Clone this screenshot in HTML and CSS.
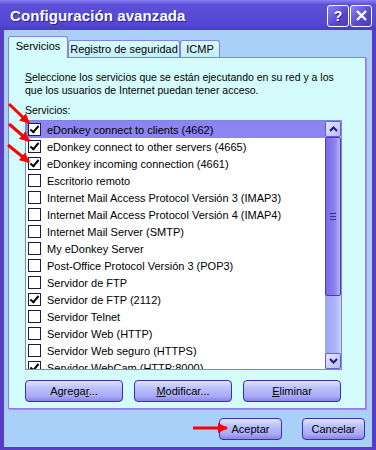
FILE: index.html
```html
<!DOCTYPE html>
<html lang="es">
<head>
    <meta charset="UTF-8">
    <title>Configuración avanzada</title>
    <link rel="stylesheet" href="styles.css">
</head>
<body>
<div class="window">
    <div class="titlebar">
        <span class="title">Configuración avanzada</span>
        <span class="title-btn">?</span>
        <span class="title-btn close">
            <svg width="13" height="13" viewBox="0 0 13 13"><path d="M2 2 L11 11 M11 2 L2 11" stroke="#fff" stroke-width="2.4"/></svg>
        </span>
    </div>

    <div class="client">
        <div class="tabs">
            <div class="tab active">Servicios</div>
            <div class="tab tab-wide">Registro de seguridad</div>
            <div class="tab tab-small">ICMP</div>
        </div>

        <div class="panel">
            <p class="intro"><u>S</u>eleccione los servicios que se están ejecutando en su red y a los<br>que los usuarios de Internet puedan tener acceso.</p>
            <p class="label">Servicios:</p>

            <div class="listbox">
                <div class="rows">
                    <div class="row selected"><span class="check on"></span>eDonkey connect to clients (4662)</div>
                    <div class="row"><span class="check on"></span>eDonkey connect to other servers (4665)</div>
                    <div class="row"><span class="check on"></span>eDonkey incoming connection (4661)</div>
                    <div class="row"><span class="check"></span>Escritorio remoto</div>
                    <div class="row"><span class="check"></span>Internet Mail Access Protocol Versión 3 (IMAP3)</div>
                    <div class="row"><span class="check"></span>Internet Mail Access Protocol Versión 4 (IMAP4)</div>
                    <div class="row"><span class="check"></span>Internet Mail Server (SMTP)</div>
                    <div class="row"><span class="check"></span>My eDonkey Server</div>
                    <div class="row"><span class="check"></span>Post-Office Protocol Versión 3 (POP3)</div>
                    <div class="row"><span class="check"></span>Servidor de FTP</div>
                    <div class="row"><span class="check on"></span>Servidor de FTP (2112)</div>
                    <div class="row"><span class="check"></span>Servidor Telnet</div>
                    <div class="row"><span class="check"></span>Servidor Web (HTTP)</div>
                    <div class="row"><span class="check"></span>Servidor Web seguro (HTTPS)</div>
                    <div class="row"><span class="check on"></span>Servidor WebCam (HTTP:8000)</div>
                </div>
                <div class="scrollbar">
                    <div class="sb-btn">
                        <svg width="9" height="6" viewBox="0 0 9 6"><path d="M1 5 L4.5 1.5 L8 5" fill="none" stroke="#2a1870" stroke-width="2"/></svg>
                    </div>
                    <div class="sb-thumb"><span class="grip"></span></div>
                    <div class="sb-track"></div>
                    <div class="sb-btn">
                        <svg width="9" height="6" viewBox="0 0 9 6"><path d="M1 1 L4.5 4.5 L8 1" fill="none" stroke="#2a1870" stroke-width="2"/></svg>
                    </div>
                </div>
            </div>

            <div class="panel-buttons">
                <button class="btn">Agrega<u>r</u>...</button>
                <button class="btn"><u>M</u>odificar...</button>
                <button class="btn"><u>E</u>liminar</button>
            </div>
        </div>

        <div class="dialog-buttons">
            <button class="btn btn-small">Aceptar</button>
            <button class="btn btn-small">Cancelar</button>
        </div>
    </div>

    <!-- red arrows drawn over the screenshot -->
    <svg class="arrows" width="376" height="450" viewBox="0 0 376 450">
        <defs>
            <marker id="head" markerWidth="10" markerHeight="10" refX="9" refY="5" orient="auto" markerUnits="userSpaceOnUse">
                <path d="M0 0 L10 5 L0 10 z" fill="#f00"/>
            </marker>
        </defs>
        <line x1="9" y1="104" x2="29" y2="123" stroke="#f00" stroke-width="3" marker-end="url(#head)"/>
        <line x1="9" y1="124" x2="29" y2="141" stroke="#f00" stroke-width="3" marker-end="url(#head)"/>
        <line x1="8" y1="145" x2="29" y2="162" stroke="#f00" stroke-width="3" marker-end="url(#head)"/>
        <line x1="193" y1="428" x2="227" y2="428" stroke="#f00" stroke-width="3" marker-end="url(#head)"/>
    </svg>
</div>
</body>
</html>
```

FILE: styles.css
```css
* {
    margin: 0;
    padding: 0;
    box-sizing: border-box;
}

body {
    width: 376px;
    height: 450px;
    overflow: hidden;
    font-family: "Liberation Sans", Arial, sans-serif;
    font-size: 11px;
    color: #000;
}

.window {
    position: relative;
    width: 376px;
    height: 450px;
    display: flex;
    flex-direction: column;
    background: #5a3cc8;
}

.titlebar {
    height: 30px;
    display: flex;
    align-items: center;
    padding: 1px 4px 0 10px;
    background: linear-gradient(#8a82f4, #5c50d8 15%, #5448d2 80%, #4a3cc2);
}

.title {
    flex: 1;
    color: #fff;
    font-weight: bold;
    font-size: 15px;
    letter-spacing: 0.1px;
    text-shadow: 1px 1px #2c2490;
}

.title-btn {
    width: 22px;
    height: 22px;
    margin-left: 1px;
    border: 1px solid #fff;
    border-radius: 3px;
    background: linear-gradient(135deg, #8a84f4, #5448d0 60%, #4a3cc0);
    color: #fff;
    font-size: 14px;
    font-weight: bold;
    display: flex;
    align-items: center;
    justify-content: center;
    text-shadow: 1px 1px #2c2490;
}

.client {
    flex: 1;
    margin: 0 4px 3px;
    padding: 6px 6px 0 4px;
    background: #a8d0f8;
    display: flex;
    flex-direction: column;
}

.tabs {
    display: flex;
    align-items: flex-end;
    height: 21px;
}

.tab {
    height: 17px;
    width: 112px;
    border: 1px solid #8a80e4;
    border-bottom: none;
    border-radius: 3px 3px 0 0;
    background: linear-gradient(#d8fcfc, #c4eefc);
    line-height: 16px;
    text-align: center;
}

.tab.active {
    position: relative;
    z-index: 1;
    width: 60px;
    height: 22px;
    margin-bottom: -1px;
    background: #d4fcfc;
    line-height: 19px;
}

.tab-small {
    width: 40px;
}

.panel {
    height: 352px;
    border: 1px solid #8a80e4;
    background: #d4fcfc;
    box-shadow: 1px 1px 0 #9c94ec, 2px 2px 0 #bcc0f6;
    padding: 13px 0 0 16px;
}

.intro,
.label {
    font-size: 10.5px;
    line-height: 13px;
}

.intro {
    white-space: nowrap;
}

.label {
    margin-top: 7px;
}

.listbox {
    display: flex;
    width: 317px;
    height: 250px;
    margin-top: 3px;
    border: 1px solid #7c84e4;
    background: #fff;
}

.rows {
    flex: 1;
    overflow: hidden;
}

.row {
    height: 17px;
    display: flex;
    align-items: center;
    gap: 6px;
    padding-left: 2px;
    white-space: nowrap;
}

.row.selected {
    background: #8c84f0;
}

.check {
    position: relative;
    flex: none;
    width: 13px;
    height: 13px;
    border: 1px solid #1c1c3c;
    background: #fff;
}

.check.on::after {
    content: "";
    position: absolute;
    left: 3px;
    top: 0;
    width: 3px;
    height: 7px;
    border: solid #000;
    border-width: 0 2px 2px 0;
    transform: rotate(40deg);
}

.scrollbar {
    width: 16px;
    display: flex;
    flex-direction: column;
    background: linear-gradient(90deg, #9ca4f6, #aeb8fa 70%, #c8d4fc);
}

.sb-btn {
    height: 16px;
    border: 1px solid #6a5ed8;
    border-radius: 2px;
    background: linear-gradient(135deg, #e4e8fe, #b4bcfa);
    display: flex;
    align-items: center;
    justify-content: center;
}

.sb-thumb {
    height: 159px;
    border: 1px solid #4c3cb8;
    border-radius: 2px;
    background: linear-gradient(90deg, #7a6ae6, #8c80ee 60%, #b0b4f8),
                linear-gradient(#8070ea, #a8c0fa);
    display: flex;
    align-items: center;
    justify-content: center;
}

.grip {
    width: 6px;
    height: 7px;
    border-top: 1px solid #3c2c98;
    border-bottom: 1px solid #3c2c98;
    background: linear-gradient(#3c2c98, #3c2c98) center / 6px 1px no-repeat;
}

.sb-track {
    flex: 1;
}

.panel-buttons {
    display: flex;
    gap: 11px;
    margin-top: 10px;
}

.btn {
    width: 98px;
    height: 22px;
    border: 1px solid #3e2eaa;
    border-radius: 4px;
    background: linear-gradient(#e0e2fe, #bcc0fa 35%, #a8acf6 75%, #8a82e6);
    font-family: "Liberation Sans", Arial, sans-serif;
    font-size: 11px;
    color: #000;
}

.dialog-buttons {
    display: flex;
    justify-content: flex-end;
    gap: 20px;
    margin-top: 9px;
    padding-right: 1px;
}

.btn-small {
    width: 63px;
}

.arrows {
    position: absolute;
    left: 0;
    top: 0;
    pointer-events: none;
}
```
